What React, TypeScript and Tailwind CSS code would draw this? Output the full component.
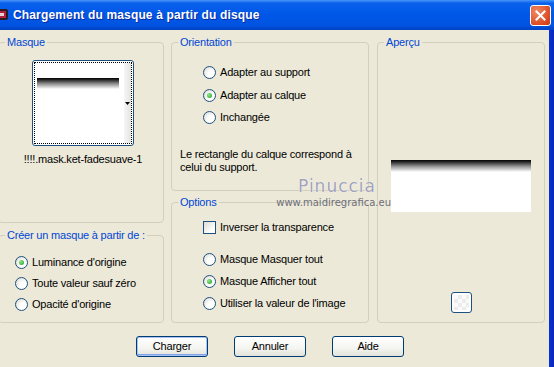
const Radio = ({ checked = false }: { checked?: boolean }) => (
  <span className="flex h-[13px] w-[13px] shrink-0 items-center justify-center rounded-full border border-[#1C5180] bg-[radial-gradient(circle_at_70%_70%,#ffffff_35%,#d6d4cb_100%)]">
    {checked && (
      <span className="h-[5px] w-[5px] rounded-full bg-[radial-gradient(circle_at_35%_35%,#8be68b,#1f9f1f)]" />
    )}
  </span>
);

const Option = ({ label, checked = false }: { label: string; checked?: boolean }) => (
  <div className="flex h-[13px] items-center gap-[4px] leading-[13px]">
    <Radio checked={checked} />
    <span className="whitespace-nowrap">{label}</span>
  </div>
);

const Group = ({
  title,
  className,
  children,
}: {
  title: string;
  className?: string;
  children?: React.ReactNode;
}) => (
  <fieldset className={`rounded-[4px] border border-[#D0D0BF] ${className ?? ""}`}>
    <legend className="ml-[6px] px-[2px] leading-[13px] text-[#0046D5]">{title}</legend>
    {children}
  </fieldset>
);

const XpButton = ({ label, primary = false }: { label: string; primary?: boolean }) => (
  <button
    className={`h-[21px] w-[72px] rounded-[3px] border border-[#003C74] bg-[linear-gradient(to_bottom,#ffffff_0%,#f4f4f0_60%,#e3e2da_100%)] leading-[17px] ${
      primary ? "shadow-[inset_0_0_0_1px_#a9c4f4,inset_0_-1px_0_1px_#7fa2e6]" : ""
    }`}
  >
    {label}
  </button>
);

export default function App() {
  return (
    <div className="relative h-[367px] w-[554px] overflow-hidden bg-[#ECE9D8] font-['Liberation_Sans',Arial,sans-serif] text-[11px] tracking-[-0.2px] text-black">
      {/* title bar */}
      <div className="flex h-[30px] items-center bg-[linear-gradient(to_bottom,#4a96f8_0%,#0a61ea_10%,#0058e8_45%,#0053e0_85%,#0041c4_100%)]">
        <svg width="9" height="13" viewBox="0 0 9 13" className="-mt-[2px] shrink-0">
          <rect x="-4" y="1" width="12" height="11" rx="2" fill="#2a1a22" />
          <rect x="-2" y="3" width="8" height="7" fill="#b02040" />
          <rect x="0" y="5" width="4" height="3" fill="#e8d0d8" />
        </svg>
        <span className="ml-[4px] -mt-[1px] font-['Liberation_Sans',Arial,sans-serif] text-[12px] font-bold tracking-[0.15px] text-white [text-shadow:1px_1px_0_#0b2aa0]">
          Chargement du masque à partir du disque
        </span>
        <div className="ml-auto mr-[3px] flex h-[21px] w-[21px] items-center justify-center rounded-[3px] border border-white bg-[radial-gradient(circle_at_30%_30%,#f08a64,#dc4b22_70%,#c23a16)]">
          <svg width="11" height="11" viewBox="0 0 11 11">
            <path d="M1.5 1.5 L9.5 9.5 M9.5 1.5 L1.5 9.5" stroke="white" strokeWidth="2" strokeLinecap="square" />
          </svg>
        </div>
      </div>

      <div className="flex h-[337px]">
        <div className="flex w-[549px] flex-col pt-[6px]">
          <div className="flex h-[287px]">
            {/* left column */}
            <div className="-ml-[2px] flex w-[166px] flex-col gap-[6px]">
              <Group title="Masque" className="h-[187px]">
                <div className="flex flex-col items-center pl-[4px] pt-[11px]">
                  <div className="h-[86px] w-[102px] rounded-[3px] border border-[#1C5180] bg-white p-px">
                    <div className="flex h-full border border-dotted border-black">
                      <div className="flex-1 pl-[2px] pt-[15px]">
                        <div className="h-[11px] w-[82px] bg-[linear-gradient(to_bottom,#000_0%,#222_15%,#888_50%,#fff_100%)]" />
                      </div>
                      <div className="flex w-[7px] items-center justify-center bg-[linear-gradient(to_right,#f6f6f6,#e4e4e4)]">
                        <svg width="5" height="3" viewBox="0 0 5 3">
                          <path d="M0 0 H5 L2.5 3 Z" fill="black" />
                        </svg>
                      </div>
                    </div>
                  </div>
                  <div className="mt-[7px] leading-[13px]">!!!!.mask.ket-fadesuave-1</div>
                </div>
              </Group>
              <Group title="Créer un masque à partir de :" className="flex-1">
                <div className="flex flex-col gap-[8px] pl-[16px] pt-[14px]">
                  <Option label="Luminance d'origine" checked />
                  <Option label="Toute valeur sauf zéro" />
                  <Option label="Opacité d'origine" />
                </div>
              </Group>
            </div>

            {/* middle column */}
            <div className="ml-[7px] flex w-[198px] flex-col gap-[5px]">
              <Group title="Orientation" className="h-[155px]">
                <div className="pl-[8px] pt-[17px]">
                  <div className="flex flex-col gap-[9.5px] pl-[23px]">
                    <Option label="Adapter au support" />
                    <Option label="Adapter au calque" checked />
                    <Option label="Inchangée" />
                  </div>
                  <p className="mt-[24px] leading-[13px]">
                    Le rectangle du calque correspond à
                    <br />
                    celui du support.
                  </p>
                </div>
              </Group>
              <Group title="Options" className="flex-1">
                <div className="flex flex-col pl-[31px] pt-[12px]">
                  <div className="flex h-[13px] items-center gap-[4px] leading-[13px]">
                    <span className="h-[13px] w-[13px] shrink-0 border border-[#1C5180] bg-[linear-gradient(135deg,#dcdad2,#ffffff_75%)]" />
                    <span>Inverser la transparence</span>
                  </div>
                  <div className="mt-[19px] flex flex-col gap-[9px]">
                    <Option label="Masque Masquer tout" />
                    <Option label="Masque Afficher tout" checked />
                    <Option label="Utiliser la valeur de l'image" />
                  </div>
                </div>
              </Group>
            </div>

            {/* right column */}
            <div className="ml-[8px] flex w-[168px] flex-col">
              <Group title="Aperçu" className="h-[288px]">
                <div className="flex flex-col items-center pt-[111px]">
                  <div className="h-[52px] w-[140px] bg-white">
                    <div className="h-[12px] bg-[linear-gradient(to_bottom,#000_0%,#333_20%,#999_55%,#fff_100%)]" />
                  </div>
                  <div className="mt-[80px] h-[21px] w-[21px] rounded-[3px] border border-[#1C5180] bg-white p-[2px]">
                    <div className="h-full w-full bg-[conic-gradient(#ececec_25%,#fafafa_0_50%,#ececec_0_75%,#fafafa_0)] bg-[length:8px_8px]" />
                  </div>
                </div>
              </Group>
            </div>
          </div>

          {/* buttons */}
          <div className="mt-[13px] flex gap-[26px] pl-[136px]">
            <XpButton label="Charger" primary />
            <XpButton label="Annuler" />
            <XpButton label="Aide" />
          </div>
        </div>
        <div className="w-[5px] bg-[linear-gradient(to_right,#0831d9,#0a24b8)]" />
      </div>

      {/* watermark */}
      <div className="pointer-events-none absolute left-[268px] top-[176px] flex w-[123px] flex-col items-end">
        <span className="mr-[15px] font-['DejaVu_Sans',sans-serif] text-[17px] leading-[20px] tracking-[1px] text-[#a2a2b8] [text-shadow:0_0_1px_#fff,0_0_1px_#fff]">
          Pinuccia
        </span>
        <span className="mt-[1px] font-['DejaVu_Sans',sans-serif] text-[10px] leading-[12px] tracking-normal text-[#6e6e78]">
          www.maidiregrafica.eu
        </span>
      </div>
    </div>
  );
}
